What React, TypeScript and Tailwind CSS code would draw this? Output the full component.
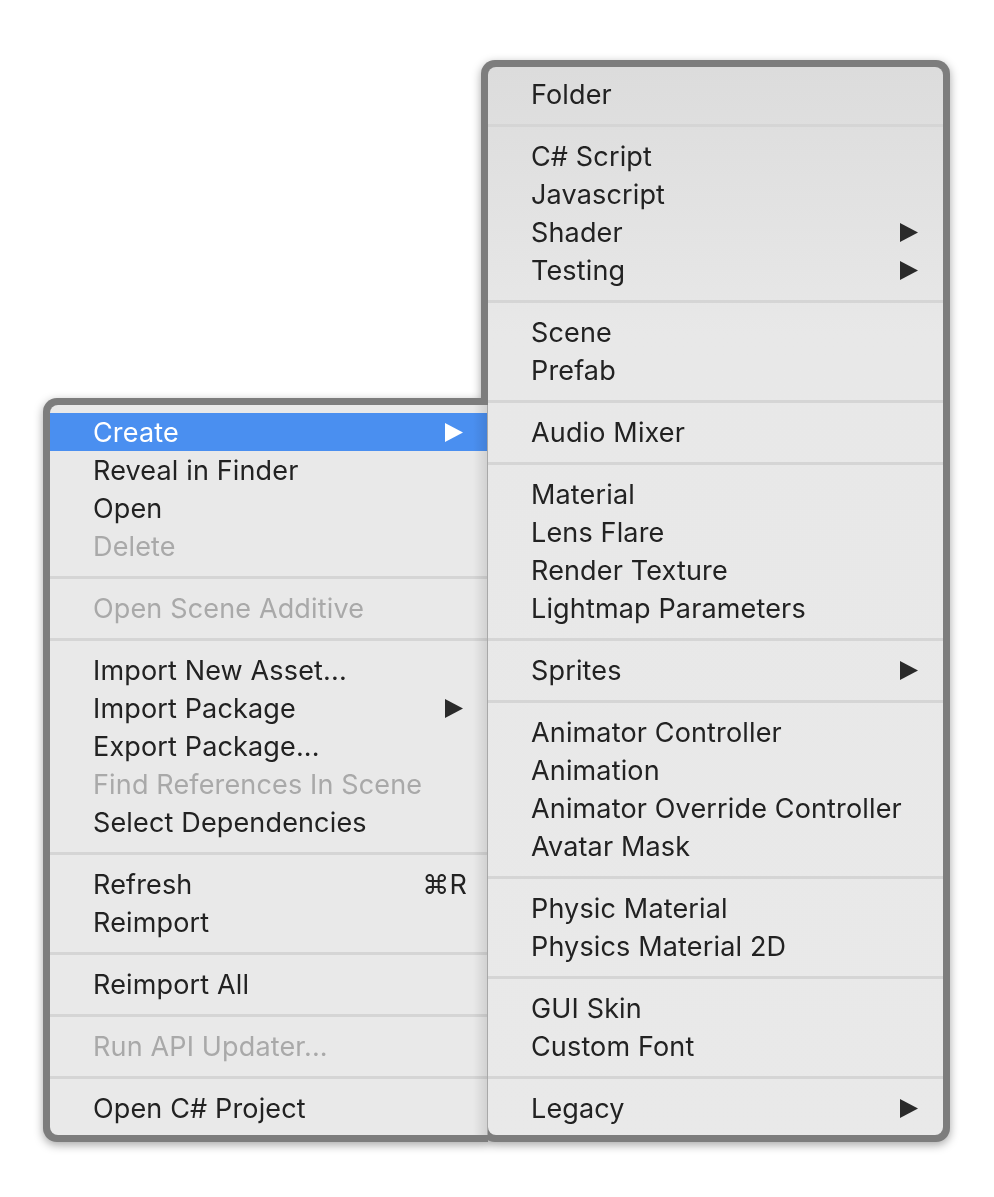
import React from 'react'

type Item =
  | { type: 'sep' }
  | { type: 'item'; label: string; disabled?: boolean; sub?: boolean; active?: boolean; shortcut?: string }

const it = (label: string, opts: Partial<Omit<Extract<Item, { type: 'item' }>, 'type' | 'label'>> = {}): Item => ({
  type: 'item',
  label,
  ...opts,
})
const sep: Item = { type: 'sep' }

const leftItems: Item[] = [
  it('Create', { sub: true, active: true }),
  it('Reveal in Finder'),
  it('Open'),
  it('Delete', { disabled: true }),
  sep,
  it('Open Scene Additive', { disabled: true }),
  sep,
  it('Import New Asset...'),
  it('Import Package', { sub: true }),
  it('Export Package...'),
  it('Find References In Scene', { disabled: true }),
  it('Select Dependencies'),
  sep,
  it('Refresh', { shortcut: '⌘R' }),
  it('Reimport'),
  sep,
  it('Reimport All'),
  sep,
  it('Run API Updater...', { disabled: true }),
  sep,
  it('Open C# Project'),
]

const rightItems: Item[] = [
  it('Folder'),
  sep,
  it('C# Script'),
  it('Javascript'),
  it('Shader', { sub: true }),
  it('Testing', { sub: true }),
  sep,
  it('Scene'),
  it('Prefab'),
  sep,
  it('Audio Mixer'),
  sep,
  it('Material'),
  it('Lens Flare'),
  it('Render Texture'),
  it('Lightmap Parameters'),
  sep,
  it('Sprites', { sub: true }),
  sep,
  it('Animator Controller'),
  it('Animation'),
  it('Animator Override Controller'),
  it('Avatar Mask'),
  sep,
  it('Physic Material'),
  it('Physics Material 2D'),
  sep,
  it('GUI Skin'),
  it('Custom Font'),
  sep,
  it('Legacy', { sub: true }),
]

const Arrow = ({ white }: { white?: boolean }) => (
  <svg width="18" height="19" viewBox="0 0 18 19" className={white ? 'fill-white' : 'fill-[#2a2a2a]'}>
    <path d="M0 0 L18 9.5 L0 19 Z" />
  </svg>
)

const MenuList = ({ items, arrowRight }: { items: Item[]; arrowRight: string }) => (
  <div className="flex flex-col py-[8px]">
    {items.map((item, i) => {
      if (item.type === 'sep') {
        return <div key={i} className="mt-[11px] mb-[10px] h-[3px] bg-[#d5d5d5]" />
      }
      const color = item.active ? 'text-white' : item.disabled ? 'text-[#a9a9a9]' : 'text-[#222222]'
      return (
        <div
          key={i}
          className={`flex h-[38px] items-center pl-[43px] ${arrowRight} ${item.active ? 'bg-[#4a8ff0]' : ''} ${color}`}
        >
          <span className="flex-1 whitespace-nowrap leading-none">{item.label}</span>
          {item.sub && <Arrow white={item.active} />}
          {item.shortcut && <span className="mr-[-4px] leading-none">{item.shortcut}</span>}
        </div>
      )
    })}
  </div>
)

export default function App() {
  return (
    <div className="min-h-screen bg-white pl-[43px] pt-[60px] text-[27px] tracking-[0.15px] [font-family:Inter,'Liberation_Sans',sans-serif]">
      <div className="flex items-end drop-shadow-[0_3px_5px_rgba(0,0,0,0.35)]">
        {/* main context menu */}
        <div className="relative z-10 -mr-[7px] w-[445px] rounded-l-[14px] bg-[#7d7d7d] py-[7px] pl-[7px]">
          <div className="relative rounded-l-[8px] border-r border-[#a8a8a8] bg-[#e9e9e9]">
            <MenuList items={leftItems} arrowRight="pr-[24px]" />
            <div className="pointer-events-none absolute inset-y-0 right-0 w-[14px] bg-gradient-to-l from-black/10 to-transparent" />
          </div>
        </div>
        {/* create submenu */}
        <div className="w-[469px] rounded-[14px] bg-[#7d7d7d] p-[7px]">
          <div className="rounded-[8px] bg-gradient-to-b from-[#dcdcdc] via-[#e8e8e8] via-25% to-[#e9e9e9]">
            <MenuList items={rightItems} arrowRight="pr-[25px]" />
          </div>
        </div>
      </div>
    </div>
  )
}
